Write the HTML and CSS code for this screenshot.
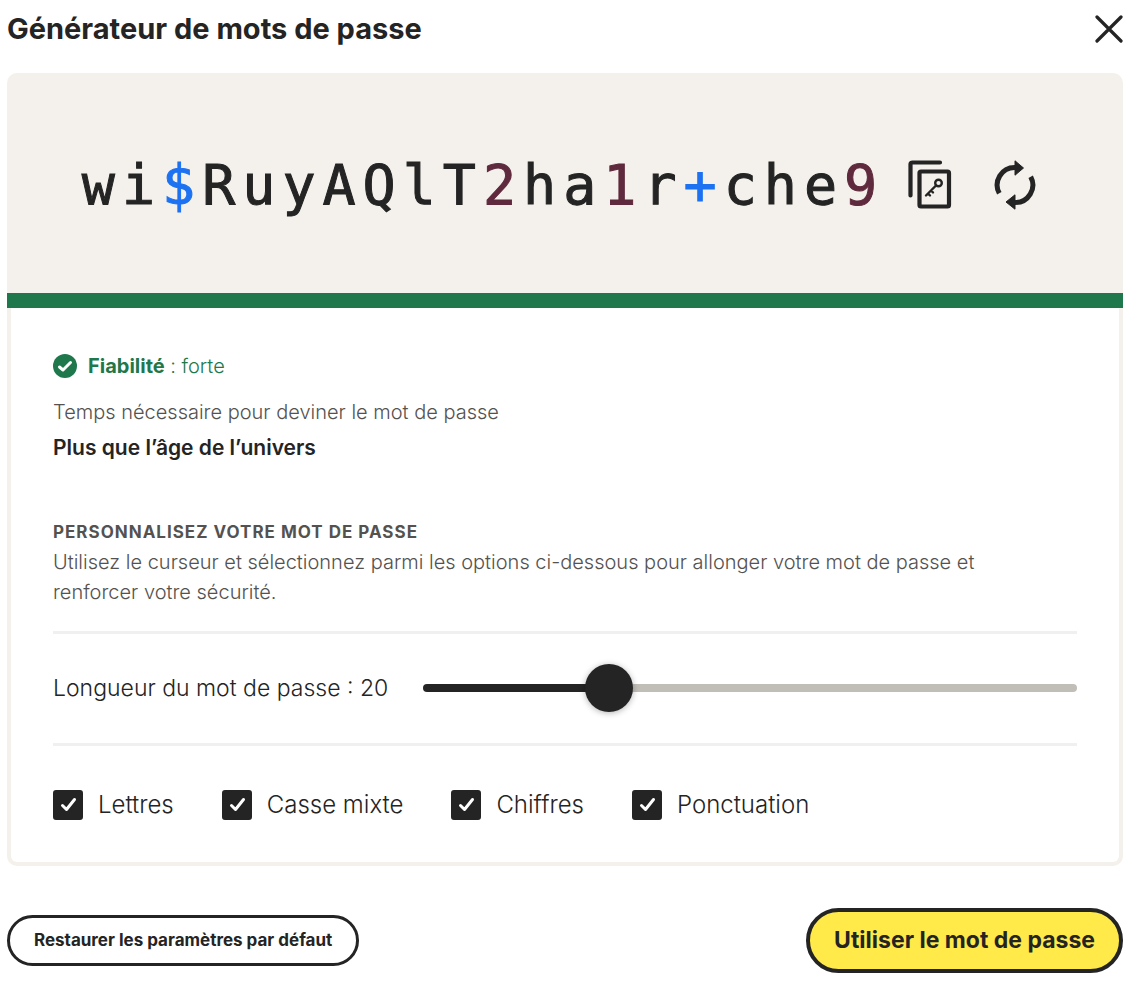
FILE: index.html
```html
<!DOCTYPE html>
<html lang="fr">
<head>
<meta charset="utf-8">
<meta name="viewport" content="width=device-width, initial-scale=1">
<title>Générateur de mots de passe</title>
<link rel="stylesheet" href="styles.css">
</head>
<body>
<main class="dialog">
  <header class="dialog-header">
    <h1 class="title">Générateur de mots de passe</h1>
    <button class="icon-button" type="button" aria-label="Fermer">
      <svg width="28" height="28" viewBox="0 0 28 28" fill="none" stroke="currentColor" stroke-width="3.200" stroke-linecap="round"><path d="M2 2 26 26M26 2 2 26"/></svg>
    </button>
  </header>

  <section class="generated">
    <output class="password">wi<span class="symbol">$</span>RuyAQlT<span class="digit">2</span>ha<span class="digit">1</span>r<span class="symbol">+</span>che<span class="digit">9</span></output>
    <button class="icon-button" type="button" aria-label="Copier le mot de passe">
      <svg width="44" height="50" viewBox="0 0 44 50" fill="none" stroke="currentColor" stroke-width="4.200" stroke-linecap="round" stroke-linejoin="round">
        <path d="M2.500 35.500V4Q2.500 2.500 4.500 2.500H32"/>
        <rect x="11.500" y="11.500" width="29.500" height="35" rx="1.500"/>
        <circle cx="30.500" cy="23" r="3.300" stroke-width="2.400"/>
        <path d="M28 25.500 18 35.500M20 33.500l2 2M23 30.500l2 2" stroke-width="2.400"/>
      </svg>
    </button>
    <button class="icon-button refresh" type="button" aria-label="Générer un nouveau mot de passe">
      <svg width="42" height="50" viewBox="0 0 42 50" fill="none" stroke="currentColor" stroke-width="5">
        <path d="M5.300 33.300A17.500 17.500 0 0 1 21 7.500"/>
        <path d="M36.700 16.700A17.500 17.500 0 0 1 21 42.500"/>
        <path d="M21 .8V15.200L29.500 8Z" fill="currentColor" stroke-width="1" stroke-linejoin="round"/>
        <path d="M21 34.800V49.200L12 42Z" fill="currentColor" stroke-width="1" stroke-linejoin="round"/>
      </svg>
    </button>
  </section>
  <div class="strength-bar"></div>

  <section class="panel">
    <p class="strength">
      <svg width="24" height="24" viewBox="0 0 24 24" fill="none"><circle cx="12" cy="12" r="12" fill="currentColor"/><path d="M6.500 13 10 16 17.500 8.500" stroke="#fff" stroke-width="3" stroke-linecap="round" stroke-linejoin="round"/></svg>
      <span><strong>Fiabilité</strong> : forte</span>
    </p>
    <p class="body-text">Temps nécessaire pour deviner le mot de passe</p>
    <p class="crack-time">Plus que l’âge de l’univers</p>

    <h2 class="section-title">PERSONNALISEZ VOTRE MOT DE PASSE</h2>
    <p class="body-text">Utilisez le curseur et sélectionnez parmi les options ci-dessous pour allonger votre mot de passe et renforcer votre sécurité.</p>

    <div class="length-row">
      <label for="length">Longueur du mot de passe : 20</label>
      <input class="slider" id="length" type="range" min="4" max="64" value="20" style="--fill: 28%">
    </div>

    <div class="options">
      <label class="option"><span class="tick"><input type="checkbox" checked><svg viewBox="0 0 30 30"><path d="M9.500 15.500 13.500 19.500 21.500 9.500"/></svg></span>Lettres</label>
      <label class="option"><span class="tick"><input type="checkbox" checked><svg viewBox="0 0 30 30"><path d="M9.500 15.500 13.500 19.500 21.500 9.500"/></svg></span>Casse mixte</label>
      <label class="option"><span class="tick"><input type="checkbox" checked><svg viewBox="0 0 30 30"><path d="M9.500 15.500 13.500 19.500 21.500 9.500"/></svg></span>Chiffres</label>
      <label class="option"><span class="tick"><input type="checkbox" checked><svg viewBox="0 0 30 30"><path d="M9.500 15.500 13.500 19.500 21.500 9.500"/></svg></span>Ponctuation</label>
    </div>
  </section>

  <footer class="actions">
    <button class="button" type="button">Restaurer les paramètres par défaut</button>
    <button class="button primary" type="button">Utiliser le mot de passe</button>
  </footer>
</main>
</body>
</html>
```

FILE: styles.css
```css
* { box-sizing: border-box; }

body {
  margin: 0;
  background: #fff;
  color: #242424;
  font-family: Inter, "Liberation Sans", sans-serif;
}

h1, h2, p { margin: 0; }

button {
  color: inherit;
  font-family: inherit;
  cursor: pointer;
}

.dialog { padding: 9px 20px 20px 7px; }

.dialog-header {
  display: flex;
  align-items: center;
  justify-content: space-between;
  height: 40px;
  margin-bottom: 24px;
}

.title {
  font-size: 29px;
  font-weight: 700;
  line-height: 40px;
}

.icon-button {
  display: flex;
  padding: 0;
  border: 0;
  background: none;
}

.generated {
  display: flex;
  align-items: center;
  justify-content: center;
  height: 220px;
  padding: 4px 12px 0 0;
  border-radius: 10px 10px 0 0;
  background: #f4f0eb;
}

.password {
  margin-right: 24px;
  font-family: "DejaVu Sans Mono", monospace;
  font-size: 55px;
  letter-spacing: 7px;
  line-height: 64px;
  white-space: nowrap;
  -webkit-text-stroke: 1px;
}

.symbol { color: #1d72f2; }
.digit { color: #5f2a3d; }
.refresh { margin-left: 42px; }

.strength-bar {
  height: 15px;
  background: #1f784b;
}

.panel {
  padding: 43px 42px 42px;
  border: 4px solid #f4f0eb;
  border-top: 0;
  border-radius: 0 0 10px 10px;
}

.strength {
  display: flex;
  align-items: center;
  gap: 11px;
  margin-bottom: 16px;
  color: #1f784b;
  font-size: 20px;
  font-weight: 300;
  line-height: 30px;
}

.strength strong { font-weight: 700; }

.body-text {
  max-width: 1000px;
  color: #545250;
  font-size: 20px;
  font-weight: 300;
  line-height: 30px;
}

.crack-time {
  margin: 4px 0 52px;
  font-size: 21px;
  font-weight: 600;
  line-height: 34px;
}

.section-title {
  color: #545250;
  font-size: 17px;
  font-weight: 700;
  letter-spacing: 1px;
  line-height: 30px;
}

.length-row {
  display: flex;
  align-items: center;
  gap: 35px;
  height: 115px;
  margin: 24px 0 44px;
  padding-bottom: 2px;
  border: solid #f1f0ee;
  border-width: 3px 0;
  font-size: 23px;
  font-weight: 300;
}

.slider {
  flex: 1;
  min-width: 0;
  height: 48px;
  margin: 0;
  appearance: none;
  background: none;
}

.slider::-webkit-slider-runnable-track {
  height: 8px;
  border-radius: 4px;
  background: linear-gradient(to right, #242424 var(--fill), #c1beb7 var(--fill));
}

.slider::-webkit-slider-thumb {
  width: 48px;
  height: 48px;
  margin-top: -20px;
  appearance: none;
  border-radius: 50%;
  background: #242424;
  box-shadow: 0 1px 6px rgba(0, 0, 0, 0.3);
}

.options {
  display: flex;
  flex-wrap: wrap;
  gap: 16px 48px;
}

.option {
  display: flex;
  align-items: center;
  gap: 15px;
  font-size: 24px;
  font-weight: 300;
  line-height: 30px;
}

.tick { display: grid; }

.tick input,
.tick svg {
  grid-area: 1 / 1;
  width: 30px;
  height: 30px;
  margin: 0;
}

.tick input {
  appearance: none;
  border: 2px solid #242424;
  border-radius: 3px;
}

.tick input:checked { background: #242424; }

.tick svg {
  fill: none;
  stroke: #fff;
  stroke-width: 3;
  stroke-linecap: round;
  stroke-linejoin: round;
  pointer-events: none;
}

.actions {
  display: flex;
  align-items: center;
  justify-content: space-between;
  margin-top: 42px;
}

.button {
  padding: 0 24px;
  border: 3px solid #242424;
  border-radius: 33px;
  background: #fff;
  font-size: 17px;
  font-weight: 700;
  line-height: 45px;
}

.primary {
  border-width: 4px;
  background: #ffea49;
  font-size: 23px;
  line-height: 57px;
}
```
